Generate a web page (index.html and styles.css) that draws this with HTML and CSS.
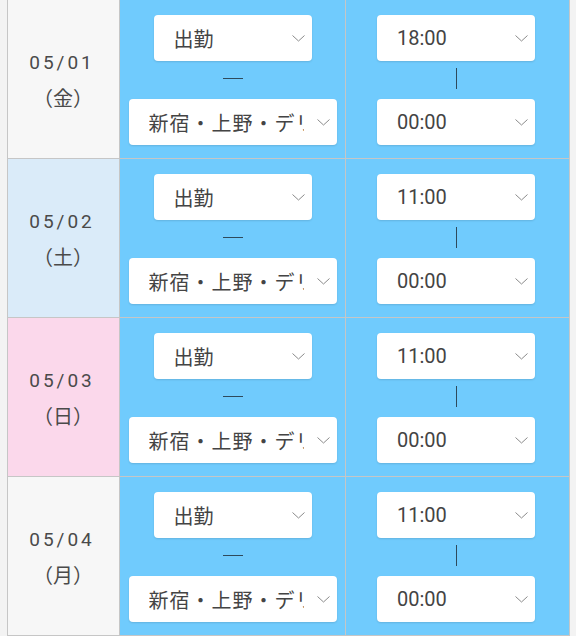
FILE: index.html
```html
<!DOCTYPE html>
<html lang="ja">
<head>
    <meta charset="UTF-8">
    <meta name="viewport" content="width=device-width, initial-scale=1.0">
    <title>シフト申請</title>
    <link rel="stylesheet" href="styles.css">
</head>
<body>
    <div class="schedule">
        <div class="day">
            <div class="date">05/01<br><span class="week">（金）</span></div>
            <div class="cell">
                <div class="pick pick-status"><span class="val">出勤</span><svg class="chev" viewBox="0 0 13 7"><polyline points="0.5,0.5 6.5,6 12.5,0.5"/></svg></div>
                <div class="sep"><div class="dash"></div></div>
                <div class="pick pick-place"><span class="val">新宿・上野・デリバリー</span><svg class="chev" viewBox="0 0 13 7"><polyline points="0.5,0.5 6.5,6 12.5,0.5"/></svg></div>
            </div>
            <div class="cell">
                <div class="pick pick-time"><span class="val">18:00</span><svg class="chev" viewBox="0 0 13 7"><polyline points="0.5,0.5 6.5,6 12.5,0.5"/></svg></div>
                <div class="sep"><div class="vbar"></div></div>
                <div class="pick pick-time"><span class="val">00:00</span><svg class="chev" viewBox="0 0 13 7"><polyline points="0.5,0.5 6.5,6 12.5,0.5"/></svg></div>
            </div>
        </div>

        <div class="day sat">
            <div class="date">05/02<br><span class="week">（土）</span></div>
            <div class="cell">
                <div class="pick pick-status"><span class="val">出勤</span><svg class="chev" viewBox="0 0 13 7"><polyline points="0.5,0.5 6.5,6 12.5,0.5"/></svg></div>
                <div class="sep"><div class="dash"></div></div>
                <div class="pick pick-place"><span class="val">新宿・上野・デリバリー</span><svg class="chev" viewBox="0 0 13 7"><polyline points="0.5,0.5 6.5,6 12.5,0.5"/></svg></div>
            </div>
            <div class="cell">
                <div class="pick pick-time"><span class="val">11:00</span><svg class="chev" viewBox="0 0 13 7"><polyline points="0.5,0.5 6.5,6 12.5,0.5"/></svg></div>
                <div class="sep"><div class="vbar"></div></div>
                <div class="pick pick-time"><span class="val">00:00</span><svg class="chev" viewBox="0 0 13 7"><polyline points="0.5,0.5 6.5,6 12.5,0.5"/></svg></div>
            </div>
        </div>

        <div class="day sun">
            <div class="date">05/03<br><span class="week">（日）</span></div>
            <div class="cell">
                <div class="pick pick-status"><span class="val">出勤</span><svg class="chev" viewBox="0 0 13 7"><polyline points="0.5,0.5 6.5,6 12.5,0.5"/></svg></div>
                <div class="sep"><div class="dash"></div></div>
                <div class="pick pick-place"><span class="val">新宿・上野・デリバリー</span><svg class="chev" viewBox="0 0 13 7"><polyline points="0.5,0.5 6.5,6 12.5,0.5"/></svg></div>
            </div>
            <div class="cell">
                <div class="pick pick-time"><span class="val">11:00</span><svg class="chev" viewBox="0 0 13 7"><polyline points="0.5,0.5 6.5,6 12.5,0.5"/></svg></div>
                <div class="sep"><div class="vbar"></div></div>
                <div class="pick pick-time"><span class="val">00:00</span><svg class="chev" viewBox="0 0 13 7"><polyline points="0.5,0.5 6.5,6 12.5,0.5"/></svg></div>
            </div>
        </div>

        <div class="day">
            <div class="date">05/04<br><span class="week">（月）</span></div>
            <div class="cell">
                <div class="pick pick-status"><span class="val">出勤</span><svg class="chev" viewBox="0 0 13 7"><polyline points="0.5,0.5 6.5,6 12.5,0.5"/></svg></div>
                <div class="sep"><div class="dash"></div></div>
                <div class="pick pick-place"><span class="val">新宿・上野・デリバリー</span><svg class="chev" viewBox="0 0 13 7"><polyline points="0.5,0.5 6.5,6 12.5,0.5"/></svg></div>
            </div>
            <div class="cell">
                <div class="pick pick-time"><span class="val">11:00</span><svg class="chev" viewBox="0 0 13 7"><polyline points="0.5,0.5 6.5,6 12.5,0.5"/></svg></div>
                <div class="sep"><div class="vbar"></div></div>
                <div class="pick pick-time"><span class="val">00:00</span><svg class="chev" viewBox="0 0 13 7"><polyline points="0.5,0.5 6.5,6 12.5,0.5"/></svg></div>
            </div>
        </div>
    </div>
</body>
</html>
```

FILE: styles.css
```css
*
{
    box-sizing: border-box;
}

body
{
    margin: 0;
    background-color: #f3f3f3;
    font-family: Roboto, "Noto Sans CJK JP", sans-serif;
    color: #444;
}

.schedule
{
    margin-left: 7px;
    width: 563px;
    border-left: 1px solid #c6c6c6;
}

.day
{
    display: flex;
    height: 159px;
    border-bottom: 1px solid #c6c6c6;
}

.date
{
    width: 112px;
    border-right: 1px solid #c6c6c6;
    background-color: #f7f7f7;
    display: flex;
    flex-direction: column;
    justify-content: center;
    align-items: center;
    text-align: center;
    font-size: 19px;
    letter-spacing: 3px;
    line-height: 36px;
    color: #4a4a4a;
    padding-top: 3px;
    padding-right: 3px;
}

.date br
{
    display: none;
}

.week
{
    letter-spacing: 0;
    font-size: 20px;
    padding-left: 2px;
}

.sat .date
{
    background-color: #daebf9;
}

.sun .date
{
    background-color: #fbd8eb;
}

.cell
{
    width: 226px;
    background-color: #70cbfd;
    border-right: 1px solid #c6c6c6;
    display: flex;
    flex-direction: column;
    align-items: center;
    padding-top: 15px;
}

.cell:last-child
{
    width: 224px;
    padding-right: 3px;
}

.pick
{
    height: 46px;
    background-color: #fff;
    border-radius: 4px;
    box-shadow: 0 1px 2px rgba(0, 0, 0, 0.12);
    display: flex;
    align-items: center;
    padding: 0 7px 0 20px;
    font-size: 20px;
    color: #444;
}

.val
{
    flex: 1;
    overflow: hidden;
    white-space: nowrap;
}

.pick-status
{
    width: 158px;
}

.pick-place
{
    width: 208px;
    letter-spacing: 1px;
}

.pick-place .val
{
    margin-right: 13px;
}

.pick-time
{
    width: 158px;
}

.chev
{
    width: 13px;
    height: 7px;
    flex-shrink: 0;
}

.chev polyline
{
    fill: none;
    stroke: #8a8a8a;
    stroke-width: 1;
}

.sep
{
    height: 38px;
    display: flex;
    align-items: center;
    justify-content: center;
    padding-bottom: 4px;
}

.dash
{
    width: 20px;
    height: 1px;
    background-color: #2e4a5c;
}

.vbar
{
    width: 1px;
    height: 21px;
    background-color: #2e4a5c;
}
```
